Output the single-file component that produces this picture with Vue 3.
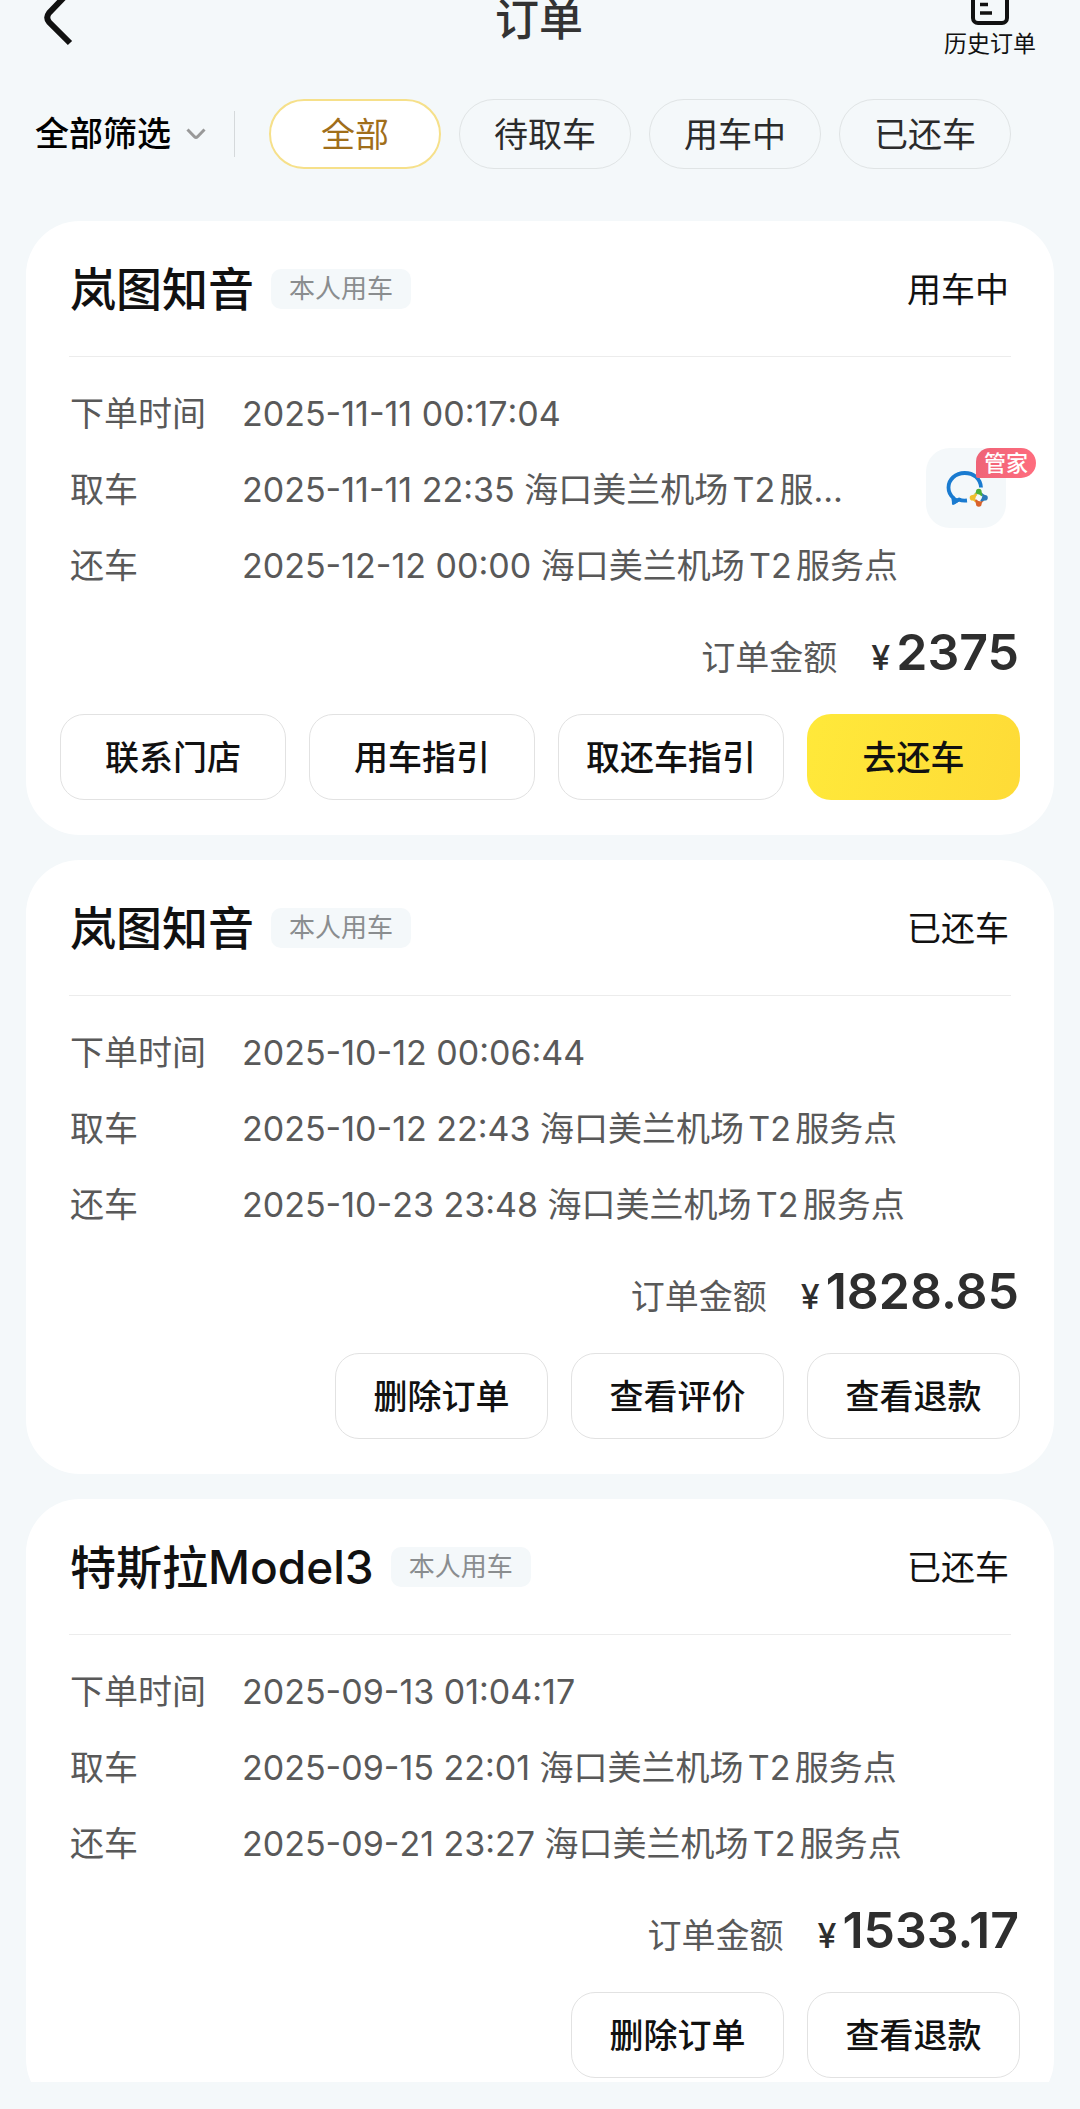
<script setup>
import { ref } from 'vue'

const tabs = ['全部', '待取车', '用车中', '已还车']
const activeTab = ref('全部')

const orders = [
  {
    id: 1,
    car: '岚图知音',
    status: '用车中',
    created: '2025-11-11 00:17:04',
    pickup: '2025-11-11 22:35 海口美兰机场T2服务点',
    dropoff: '2025-12-12 00:00 海口美兰机场T2服务点',
    amount: '2375',
    butler: true,
    actions: ['联系门店', '用车指引', '取还车指引'],
    primary: '去还车',
  },
  {
    id: 2,
    car: '岚图知音',
    status: '已还车',
    created: '2025-10-12 00:06:44',
    pickup: '2025-10-12 22:43 海口美兰机场T2服务点',
    dropoff: '2025-10-23 23:48 海口美兰机场T2服务点',
    amount: '1828.85',
    actions: ['删除订单', '查看评价', '查看退款'],
  },
  {
    id: 3,
    car: '特斯拉Model3',
    status: '已还车',
    created: '2025-09-13 01:04:17',
    pickup: '2025-09-15 22:01 海口美兰机场T2服务点',
    dropoff: '2025-09-21 23:27 海口美兰机场T2服务点',
    amount: '1533.17',
    actions: ['删除订单', '查看退款'],
  },
]
</script>

<template>
  <div class="page">
    <header class="topbar">
      <button class="back" type="button" aria-label="返回">
        <svg width="32" height="48" viewBox="0 0 32 48" fill="none" stroke="#111" stroke-width="6">
          <path d="M29 -10 L7 13 Q3.5 17.500 7 22 L28 43" />
        </svg>
      </button>
      <h1 class="title">订单</h1>
      <a class="history" href="#history">
        <svg width="38" height="28" viewBox="0 0 38 28" fill="none" stroke="#111">
          <rect x="2" y="-14" width="34" height="37" rx="5" stroke-width="4" />
          <path d="M9 4.500 H17 M9 13 H21" stroke-width="3.600" />
        </svg>
        <span>历史订单</span>
      </a>
    </header>

    <nav class="filters">
      <button class="filter-all" type="button">
        <span>全部筛选</span>
        <svg width="20" height="12" viewBox="0 0 20 12" fill="none" stroke="#999" stroke-width="3">
          <path d="M1.500 1.500 L8.500 8.700 Q10 10.200 11.500 8.700 L18.500 1.500" />
        </svg>
      </button>
      <div class="tabs">
        <button
          v-for="tab in tabs"
          :key="tab"
          type="button"
          class="tab"
          :class="{ active: tab === activeTab }"
          @click="activeTab = tab"
        >{{ tab }}</button>
      </div>
    </nav>

    <main class="list">
      <article v-for="order in orders" :key="order.id" class="card">
        <header class="card-head">
          <h2 class="car">{{ order.car }}</h2>
          <span class="tag">本人用车</span>
          <span class="status">{{ order.status }}</span>
        </header>

        <dl class="info">
          <div class="row">
            <dt>下单时间</dt>
            <dd>{{ order.created }}</dd>
          </div>
          <div class="row" :class="{ narrow: order.butler }">
            <dt>取车</dt>
            <dd>{{ order.pickup }}</dd>
          </div>
          <div class="row">
            <dt>还车</dt>
            <dd>{{ order.dropoff }}</dd>
          </div>
        </dl>

        <p class="amount">
          <span class="amount-label">订单金额</span>
          <span class="currency">¥</span>
          <span class="number">{{ order.amount }}</span>
        </p>

        <div class="actions" :class="{ wide: order.primary }">
          <button v-for="action in order.actions" :key="action" type="button" class="action">{{ action }}</button>
          <button v-if="order.primary" type="button" class="action primary">{{ order.primary }}</button>
        </div>

        <button v-if="order.butler" type="button" class="butler">
          <svg width="80" height="80" viewBox="0 0 80 80" fill="none">
            <path
              d="M55 39.500 C54.500 30.500 47.500 25 38.700 25 C29.500 25 22.500 31.500 22.500 39.500 C22.500 44 24.500 47.500 27.500 50 L28 54 L33 51.500 Q36 53 41 52.500"
              stroke="#1a7bd0"
              stroke-width="3.800"
            />
            <path d="M25.500 48 L26 56 Q28 57.500 30 55.500 L35 52 Z" fill="#1a7bd0" />
            <path d="M50 43.500 A2.800 2.800 0 1 1 55.600 43.500 Q55.600 45.500 57.500 47 L55.500 48.200 Q52.500 45 47.500 46.500 Q50 45 50 43.500 Z" fill="#4caf3a" />
            <path d="M59 46.900 A2.800 2.800 0 1 1 59 52.500 Q57 52.500 55.500 54.800 L54.300 52.500 Q57.200 49.500 56 44.800 Q57.500 46.900 59 46.900 Z" fill="#2a78b8" />
            <path d="M55.600 56 A2.800 2.800 0 1 1 50 56 Q50 54 48 52.500 L50 51.200 Q53 54.300 57.800 53 Q55.600 54.500 55.600 56 Z" fill="#d9622b" />
            <path d="M46.500 52.500 A2.800 2.800 0 1 1 46.500 46.900 Q48.500 46.900 50 44.700 L51.200 47 Q48.300 50 49.500 54.700 Q48 52.500 46.500 52.500 Z" fill="#f0bd2d" />
          </svg>
          <span class="butler-badge">管家</span>
        </button>
      </article>
    </main>
  </div>
</template>

<style>
body {
  background: #f4f8fa;
}
</style>

<style scoped>
.page {
  display: flex;
  flex-direction: column;
  height: 100vh;
  box-sizing: border-box;
  padding-bottom: 27px;
  overflow: hidden;
  background: #f4f8fa;
  color: #111;
  font-family: Inter, "Noto Sans CJK SC", sans-serif;
  font-size: 34px;
}

button {
  margin: 0;
  padding: 0;
  border: 0;
  background: none;
  color: inherit;
  font: inherit;
  cursor: pointer;
}

svg {
  display: block;
}

.topbar {
  display: grid;
  grid-template-columns: 1fr auto 1fr;
  align-items: start;
  flex: none;
  height: 60px;
  padding: 0 44px 0 42px;
}

.back {
  justify-self: start;
}

.title {
  margin: 0;
  color: #333;
  font-size: 44px;
  font-weight: 500;
  line-height: 40px;
}

.history {
  display: flex;
  flex-direction: column;
  align-items: center;
  justify-self: end;
  color: #111;
  font-size: 23px;
  line-height: 32px;
  text-decoration: none;
}

.filters {
  display: flex;
  align-items: center;
  flex: none;
  padding: 39px 69px 52px 35px;
}

.filter-all {
  display: flex;
  align-items: center;
  gap: 15px;
  padding-right: 28px;
  border-right: 1px solid #d5d9db;
  color: #000;
  font-weight: 500;
  line-height: 46px;
}

.tabs {
  display: grid;
  grid-template-columns: repeat(4, 1fr);
  flex: 1;
  gap: 18px;
  margin-left: 34px;
}

.tab {
  height: 70px;
  padding-bottom: 4px;
  border: 1px solid #e0e4e5;
  border-radius: 35px;
  color: #2b2b2b;
}

.tab.active {
  border: 2px solid #f6e08a;
  background: #fff;
  color: #a06e1a;
}

.list {
  display: flex;
  flex-direction: column;
  flex: 1;
  gap: 25px;
  min-height: 0;
  padding: 0 26px;
  overflow: hidden;
}

.card {
  position: relative;
  flex: none;
  padding: 0 34px 35px;
  border-radius: 54px;
  background: #fff;
}

.card-head {
  display: flex;
  align-items: center;
  height: 135px;
  margin: 0 9px;
  border-bottom: 1px solid #ececec;
}

.car {
  margin: 0 0 0 1px;
  font-size: 46px;
  font-weight: 500;
  line-height: 60px;
}

.tag {
  margin-left: 17px;
  padding: 0 18px;
  border-radius: 10px;
  background: #f4f8fa;
  color: #8a8d8f;
  font-size: 26px;
  line-height: 40px;
}

.status {
  margin-left: auto;
  padding: 0 2px 2px 0;
}

.info {
  margin: 19px 10px 0;
  color: #595959;
  line-height: 76px;
}

.row {
  display: flex;
}

.row dt {
  flex: none;
  width: 172px;
}

.row dd {
  flex: 1;
  min-width: 0;
  margin: 0;
  overflow: hidden;
  font-kerning: none;
  text-autospace: normal;
  text-overflow: ellipsis;
  white-space: nowrap;
}

.row.narrow {
  padding-right: 140px;
}

.amount {
  display: flex;
  align-items: baseline;
  justify-content: flex-end;
  height: 60px;
  margin: 18px 1px 32px 0;
  color: #2e2e2e;
  font-weight: 500;
  line-height: 60px;
}

.amount-label {
  margin-right: 34px;
  color: #595959;
  font-weight: 400;
}

.currency {
  margin-right: 6px;
}

.number {
  font-size: 50px;
  font-weight: 600;
}

.actions {
  display: flex;
  justify-content: flex-end;
  gap: 23px;
}

.action {
  width: 213px;
  height: 86px;
  padding-bottom: 4px;
  border: 1px solid #e2e2e2;
  border-radius: 24px;
  font-weight: 500;
}

.wide .action {
  flex: 1;
}

.wide .primary {
  flex: none;
  border: 0;
  background: linear-gradient(105deg, #ffe93a, #fedb37);
}

.butler {
  position: absolute;
  top: 227px;
  right: 48px;
  border-radius: 24px;
  background: #f4f8fa;
}

.butler-badge {
  position: absolute;
  top: 0;
  left: 50px;
  width: 60px;
  border-radius: 14px 15px 15px 2px;
  background: linear-gradient(100deg, #ee6377, #ff6d7e);
  color: #fff;
  font-size: 22px;
  font-weight: 500;
  line-height: 30px;
}
</style>
